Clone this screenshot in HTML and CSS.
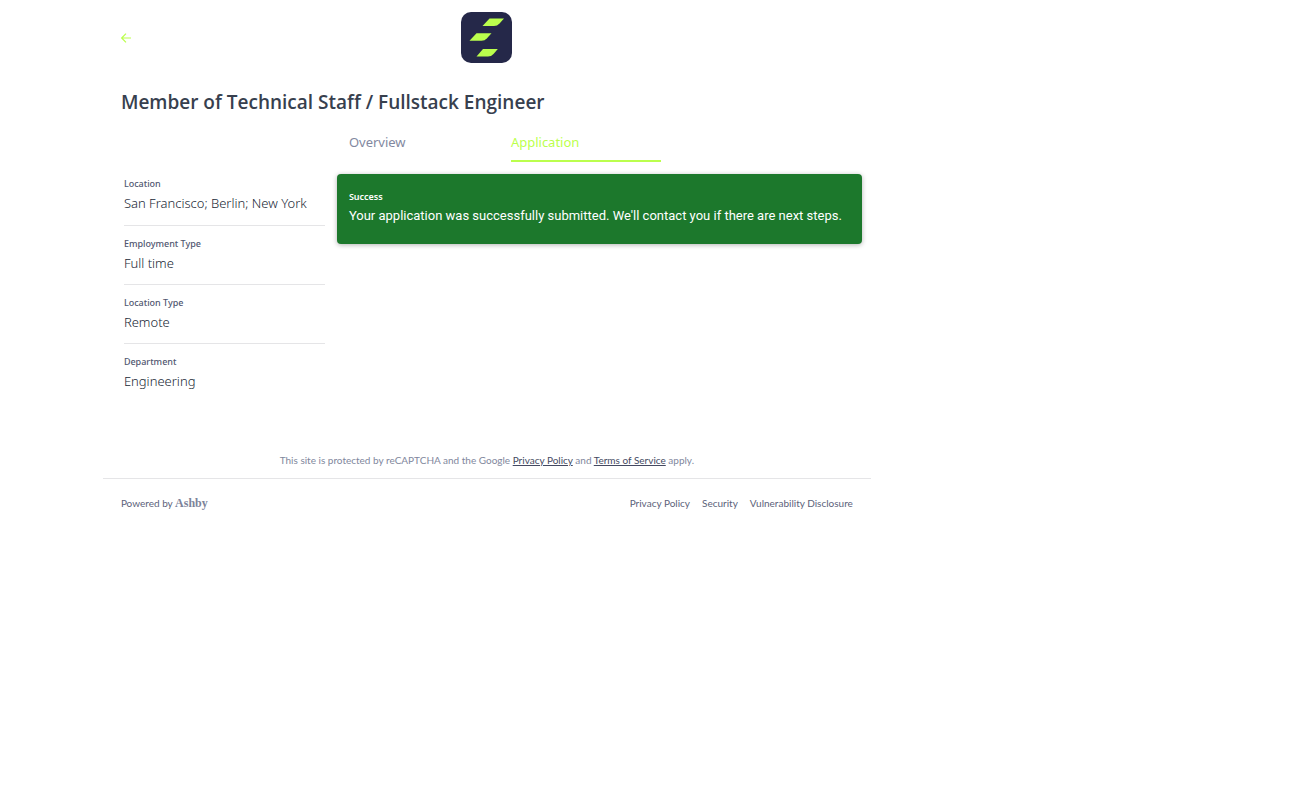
FILE: index.html
```
<!DOCTYPE html>
<html lang="en">
<head>
<meta charset="utf-8">
<title>Member of Technical Staff / Fullstack Engineer</title>
<link rel="stylesheet" href="styles.css">
</head>
<body>
<div class="page">
  <div class="container">
    <header class="header">
      <a class="back" href="#" aria-label="Back to jobs">
        <svg width="10" height="10" viewBox="0 0 10 10" fill="none" stroke="currentColor" stroke-width="1.2"><path d="M10 5H.8M5 .7L.7 5 5 9.3"/></svg>
      </a>
      <a class="logo" href="#" aria-label="Company home">
        <svg width="51" height="51" viewBox="0 0 51 51"><rect width="51" height="51" rx="10" fill="#252849"/><g fill="#bbff4d"><path d="M28.5 6.500H43L38.500 11.500Q36.200 14 33 14H21.500Z"/><path d="M15.500 21.300H30.500L26 26.300Q23.700 28.800 20.500 28.800H8.500Z"/><path d="M22 37H36.800L32.500 42Q30.200 44.500 27 44.500H15.500Z"/></g></svg>
      </a>
    </header>
    <h1 class="title">Member of Technical Staff / Fullstack Engineer</h1>
    <nav class="tabs">
      <a class="tab" href="#">Overview</a>
      <a class="tab tab-active" href="#" aria-current="page">Application</a>
    </nav>
    <div class="content">
      <aside class="details">
        <section class="detail"><h2>Location</h2><p>San Francisco; Berlin; New York</p></section>
        <section class="detail"><h2>Employment Type</h2><p>Full time</p></section>
        <section class="detail"><h2>Location Type</h2><p>Remote</p></section>
        <section class="detail"><h2>Department</h2><p>Engineering</p></section>
      </aside>
      <main>
        <div class="notice" role="status">
          <h2>Success</h2>
          <p>Your application was successfully submitted. We'll contact you if there are next steps.</p>
        </div>
      </main>
    </div>
    <p class="legal">This site is protected by reCAPTCHA and the Google <a href="#">Privacy Policy</a> and <a href="#">Terms of Service</a> apply.</p>
    <footer class="footer">
      <a class="powered" href="#">Powered by <span class="brand">Ashby</span></a>
      <nav class="links"><a href="#">Privacy Policy</a><a href="#">Security</a><a href="#">Vulnerability Disclosure</a></nav>
    </footer>
  </div>
</div>
</body>
</html>
```
FILE: styles.css
```
* { box-sizing: border-box; }
body { margin: 0; background: #fff; color: #37404e; font: 13px/20px "Noto Sans", "Open Sans", sans-serif; font-variant-ligatures: none; }
h1, h2, p { margin: 0; }
a { color: inherit; text-decoration: none; }
svg { display: block; }
.page { width: 75%; padding-left: 1px; }
.container { max-width: 768px; margin: 0 auto; }
.header { display: grid; grid-template-columns: 1fr auto 1fr; align-items: center; padding: 12px 18px 24px; }
.back { color: #bbff4d; justify-self: start; }
.title { padding: 0 18px; font-family: "Open Sans", sans-serif; font-size: 19px; line-height: 30px; font-weight: 600; color: #37404e; }
.tabs { display: flex; gap: 12px; padding: 15px 18px 12px 246px; }
.tab { width: 150px; padding-bottom: 8px; border-bottom: 2px solid transparent; color: #8288a0; }
.tab-active { color: #bbff4d; border-color: #bbff4d; }
.content { display: grid; grid-template-columns: 201px 1fr; gap: 12px; padding: 0 9px 0 21px; }
.detail { padding: 9px 0 11px; border-bottom: 1px solid #e5e5e7; }
.detail:first-child { padding: 1px 0 12px; }
.detail:last-child { border-bottom: 0; }
.detail h2, .notice h2 { font-size: 9px; line-height: 18px; font-weight: 500; }
.detail h2 { color: #515770; }
.detail p { font-weight: 300; color: #202735; }
.legal, .footer { font-family: Lato, sans-serif; font-size: 10px; }
.notice { padding: 14px 12px 18px; border-radius: 4px; background: #1c782c; color: #fff; box-shadow: 0 1px 5px rgba(0, 0, 0, .3); }
.notice h2 { font-weight: 600; }
.notice p { font-family: Roboto, sans-serif; font-size: 13px; }
.legal { padding: 49px 18px 9px; line-height: 18px; text-align: center; color: #81879d; }
.legal a { color: #444961; text-decoration: underline; }
.footer { display: flex; align-items: center; justify-content: space-between; padding: 15px 18px; border-top: 1px solid #e5e5e7; line-height: 18px; color: #5c627a; }
.brand { font: 700 12px/18px "Liberation Serif", serif; color: #7d839a; }
.links { display: flex; gap: 12px; }
```
